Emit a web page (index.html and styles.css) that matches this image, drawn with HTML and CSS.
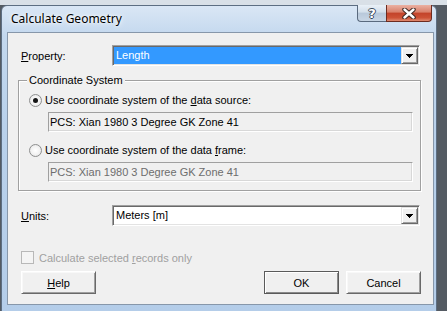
FILE: index.html
```html
<!DOCTYPE html>
<html lang="en">
<head>
    <meta charset="UTF-8">
    <meta name="viewport" content="width=device-width, initial-scale=1.0">
    <title>Calculate Geometry</title>
    <link rel="stylesheet" href="styles.css">
</head>
<body>
    <div class="window">
        <div class="titlebar">
            <span class="title">Calculate Geometry</span>
            <div class="caption">
                <span class="cap-help">?</span>
                <span class="cap-close">
                    <svg width="14" height="11" viewBox="0 0 14 11">
                        <path d="M2.5 1.5 L11.5 9.5 M11.5 1.5 L2.5 9.5" stroke="#3a2520" stroke-width="4.4" stroke-linecap="round"/>
                        <path d="M2.5 1.5 L11.5 9.5 M11.5 1.5 L2.5 9.5" stroke="#ffffff" stroke-width="2.4" stroke-linecap="round"/>
                    </svg>
                </span>
            </div>
        </div>

        <div class="client">
            <div class="row">
                <label class="label"><u>P</u>roperty:</label>
                <div class="combo">
                    <span class="combo-text selected">Length</span>
                    <span class="combo-arrow">
                        <svg width="7" height="4" viewBox="0 0 7 4"><path d="M0 0h7v1h-1v1h-1v1h-1v1h-1v-1h-1v-1h-1v-1h-1z" fill="#000"/></svg>
                    </span>
                </div>
            </div>

            <div class="group">
                <span class="legend">Coordinate System</span>
                <div class="radio-row">
                    <span class="radio checked"></span>
                    <span>Use coordinate system of the <u>d</u>ata source:</span>
                </div>
                <div class="readonly">PCS: Xian 1980 3 Degree GK Zone 41</div>
                <div class="radio-row second">
                    <span class="radio"></span>
                    <span>Use coordinate system of the data <u>f</u>rame:</span>
                </div>
                <div class="readonly disabled">PCS: Xian 1980 3 Degree GK Zone 41</div>
            </div>

            <div class="row units">
                <label class="label"><u>U</u>nits:</label>
                <div class="combo">
                    <span class="combo-text">Meters [m]</span>
                    <span class="combo-arrow">
                        <svg width="7" height="4" viewBox="0 0 7 4"><path d="M0 0h7v1h-1v1h-1v1h-1v1h-1v-1h-1v-1h-1v-1h-1z" fill="#000"/></svg>
                    </span>
                </div>
            </div>

            <div class="check-row">
                <span class="check"></span>
                <span>Calculate selected <u>r</u>ecords only</span>
            </div>

            <div class="buttons">
                <button class="btn"><u>H</u>elp</button>
                <button class="btn default">OK</button>
                <button class="btn">Cancel</button>
            </div>
        </div>
    </div>
</body>
</html>
```

FILE: styles.css
```css
* {
    box-sizing: border-box;
}
body {
    margin: 0;
    height: 311px;
    overflow: hidden;
    background: linear-gradient(to bottom, #d9e0e7 0, #d9e0e7 5px, #545b63 5px);
    font-family: "Liberation Sans", Arial, sans-serif;
    font-size: 11px;
    color: #000;
}
.window {
    margin: 5px 0 0 1px;
    width: 436px;
    height: 310px;
    border: 1px solid #5d6e82;
    border-radius: 6px 6px 0 0;
    background: linear-gradient(to bottom, #dae7f5 0, #c3d8ee 30px, #b9d1eb 120px, #b4cde9);
}
.titlebar {
    height: 26px;
    display: flex;
    justify-content: space-between;
    padding-left: 9px;
}
.title {
    font-family: "Noto Sans", "Open Sans", sans-serif;
    font-size: 12px;
    line-height: 26px;
    color: #000;
    text-shadow: 0 0 6px #fff, 0 0 3px #fff;
}
.caption {
    display: flex;
    margin-top: -1px;
    margin-right: 4px;
    height: 17px;
}
.cap-help,
.cap-close {
    display: flex;
    align-items: center;
    justify-content: center;
    height: 17px;
    border: 1px solid #5a6a7e;
    border-top: none;
}
.cap-help {
    width: 29px;
    border-right: none;
    border-radius: 0 0 0 4px;
    background: linear-gradient(to bottom, #e9f0f7 0, #d3dfeb 45%, #b8c8da 50%, #c8d6e5 100%);
    font-family: "DejaVu Sans", sans-serif;
    font-weight: bold;
    font-size: 13px;
    line-height: 17px;
    color: #fff;
    text-shadow: 1px 0 0 #3b4a5c, -1px 0 0 #3b4a5c, 0 1px 0 #3b4a5c, 0 -1px 0 #3b4a5c;
}
.cap-close {
    width: 46px;
    border-color: #6d2c20;
    border-radius: 0 0 4px 0;
    background: linear-gradient(to bottom, #eab1a2 0, #d9806a 45%, #c3432a 50%, #cd5236 80%, #e08a70 100%);
}
.client {
    margin: 0 2px 0 5px;
    height: 273px;
    border: 1px solid #8797aa;
    background: #f0f0f0;
    padding: 12px 0 0 13px;
}
.row {
    display: flex;
    align-items: center;
    height: 21px;
}
.label {
    width: 91px;
}
.combo {
    width: 308px;
    height: 21px;
    display: flex;
    padding: 1px;
    border: 1px solid;
    border-color: #a0a0a0 #ffffff #ffffff #a0a0a0;
    box-shadow: inset 1px 1px 0 #696969, inset -1px -1px 0 #e3e3e3;
    background: #fff;
}
.combo-text {
    flex: 1;
    line-height: 17px;
    padding-left: 2px;
}
.combo-text.selected {
    background: #3399ff;
    color: #fff;
}
.combo-arrow {
    width: 17px;
    height: 17px;
    display: flex;
    align-items: center;
    justify-content: center;
    background: #f0f0f0;
    border: 1px solid;
    border-color: #e3e3e3 #696969 #696969 #e3e3e3;
    box-shadow: inset 1px 1px 0 #fff, inset -1px -1px 0 #a0a0a0;
}
.group {
    position: relative;
    margin: 14px 0 0 -3px;
    width: 403px;
    height: 111px;
    border: 1px solid #a0a0a0;
    box-shadow: inset 1px 1px 0 #fff, 1px 1px 0 #fff;
    padding: 13px 0 0 10px;
}
.legend {
    position: absolute;
    top: -7px;
    left: 8px;
    padding: 0 2px;
    line-height: 13px;
    background: #f0f0f0;
}
.radio-row {
    display: flex;
    align-items: center;
    gap: 3px;
    height: 13px;
    line-height: 13px;
}
.radio-row.second {
    margin-top: 12px;
}
.radio {
    width: 13px;
    height: 13px;
    border-radius: 50%;
    border: 1px solid #8e8f8f;
    background: radial-gradient(circle, #ffffff 0, #f2f2f2 55%, #dcdcdc 100%);
    display: flex;
    align-items: center;
    justify-content: center;
}
.radio.checked::after {
    content: "";
    width: 5px;
    height: 5px;
    border-radius: 50%;
    background: #151515;
}
.readonly {
    margin: 5px 0 0 19px;
    width: 365px;
    height: 20px;
    line-height: 18px;
    padding-left: 1px;
    border: 1px solid;
    border-color: #a0a0a0 #ffffff #ffffff #a0a0a0;
    box-shadow: inset -1px -1px 0 #d8d8d8;
    color: #000;
}
.readonly.disabled {
    color: #6d6d6d;
}
.units {
    margin-top: 14px;
}
.check-row {
    display: flex;
    align-items: center;
    gap: 5px;
    height: 13px;
    margin-top: 25px;
    color: #a0a0a0;
}
.check {
    width: 13px;
    height: 13px;
    border: 1px solid #b8b8b8;
    background: #f4f4f4;
}
.buttons {
    display: flex;
    margin-top: 7px;
    width: 400px;
}
.btn {
    width: 75px;
    height: 23px;
    padding: 0;
    font-family: "Liberation Sans", Arial, sans-serif;
    font-size: 11px;
    color: #000;
    background: #f0f0f0;
    border: 1px solid;
    border-color: #ffffff #696969 #696969 #ffffff;
    box-shadow: inset 1px 1px 0 #f8f8f8, inset -1px -1px 0 #a0a0a0;
}
.btn.default {
    margin-left: auto;
    margin-right: 7px;
    border-color: #5a5a5a;
    box-shadow: inset 1px 1px 0 #fff, inset -1px -1px 0 #8a8a8a;
}
```
